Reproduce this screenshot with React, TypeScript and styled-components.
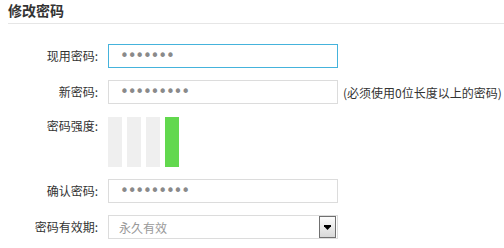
import styled, { createGlobalStyle } from "styled-components";

const GlobalStyle = createGlobalStyle`
  body {
    margin: 0;
    background: #fff;
    font-family: "Liberation Sans", "Noto Sans CJK SC", sans-serif;
    font-size: 12px;
    color: #333;
  }
`;

const Page = styled.div`
  width: 504px;
  height: 248px;
  overflow: hidden;
`;

const Header = styled.div`
  margin-left: 8px;
  height: 23px;
  border-bottom: 1px solid #e6e6e6;
`;

const Title = styled.h3`
  margin: 0;
  padding-top: 1px;
  font-size: 14px;
  line-height: 18px;
  font-weight: bold;
  color: #333;
  font-family: "Noto Sans CJK SC", sans-serif;
`;

const Form = styled.div`
  display: grid;
  grid-template-columns: 98px auto;
  column-gap: 10px;
  row-gap: 12px;
  margin-top: 20px;
`;

const Label = styled.label<{ top?: boolean }>`
  text-align: right;
  font-family: "Noto Sans CJK SC", sans-serif;
  font-size: 12px;
  color: #333;
  line-height: ${({ top }) => (top ? "18px" : "24px")};
  padding-top: ${({ top }) => (top ? "1px" : "0")};
`;

const Field = styled.div`
  display: flex;
  align-items: center;
  gap: 5px;
`;

const Input = styled.input<{ focused?: boolean }>`
  box-sizing: border-box;
  width: 230px;
  height: 24px;
  margin: 0;
  padding: 0 9px 0 11px;
  border: 1px solid ${({ focused }) => (focused ? "#45b3dc" : "#dcdcdc")};
  outline: none;
  font-family: "DejaVu Sans", sans-serif;
  font-size: 15px;
  letter-spacing: -1.2px;
  color: #8a8a8a;
`;

const Hint = styled.span`
  font-family: "Noto Sans CJK SC", sans-serif;
  font-size: 12px;
  color: #333;
  white-space: nowrap;
`;

const Bars = styled.div`
  display: flex;
  gap: 5px;
  padding-top: 1px;
`;

const Bar = styled.div<{ on?: boolean }>`
  width: 14px;
  height: 50px;
  background: ${({ on }) => (on ? "#62d84e" : "#efefef")};
`;

const Select = styled.div`
  box-sizing: border-box;
  width: 230px;
  height: 24px;
  border: 1px solid #dcdcdc;
  display: flex;
  align-items: center;
  justify-content: space-between;
  padding-left: 10px;
  padding-right: 1px;
  font-family: "Noto Sans CJK SC", sans-serif;
  font-size: 12px;
  color: #999;
`;

const Arrow = styled.div`
  box-sizing: border-box;
  width: 17px;
  height: 22px;
  border: 1px solid #707070;
  background: linear-gradient(#fdfdfd, #d8d8d8);
  display: flex;
  align-items: center;
  justify-content: center;
`;

export default function App() {
  return (
    <Page>
      <GlobalStyle />
      <Header>
        <Title>修改密码</Title>
      </Header>
      <Form>
        <Label>现用密码:</Label>
        <Field>
          <Input type="password" focused defaultValue="1234567" readOnly />
        </Field>

        <Label>新密码:</Label>
        <Field>
          <Input type="password" defaultValue="123456789" readOnly />
          <Hint>(必须使用0位长度以上的密码)</Hint>
        </Field>

        <Label top>密码强度:</Label>
        <Bars>
          <Bar />
          <Bar />
          <Bar />
          <Bar on />
        </Bars>

        <Label>确认密码:</Label>
        <Field>
          <Input type="password" defaultValue="123456789" readOnly />
        </Field>

        <Label>密码有效期:</Label>
        <Field>
          <Select>
            <span>永久有效</span>
            <Arrow>
              <svg width="7" height="5" viewBox="0 0 7 5">
                <path d="M0 0h7v1.2L3.5 5 0 1.2z" fill="#000" />
              </svg>
            </Arrow>
          </Select>
        </Field>
      </Form>
    </Page>
  );
}
